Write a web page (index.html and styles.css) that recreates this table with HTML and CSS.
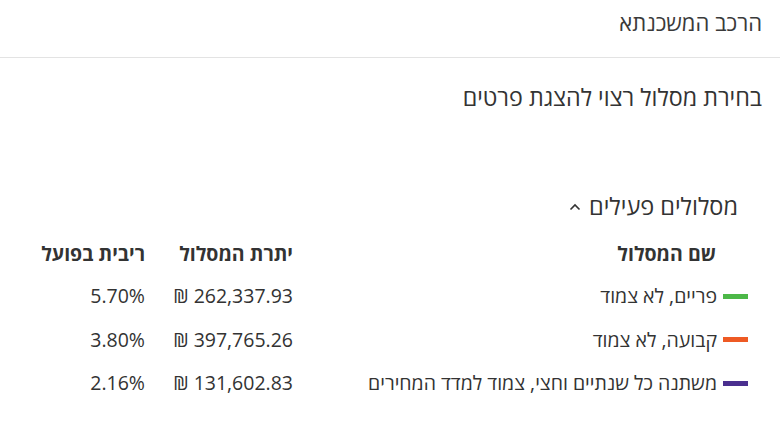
FILE: index.html
```html
<!DOCTYPE html>
<html lang="he" dir="rtl">
<head>
<meta charset="utf-8">
<link rel="stylesheet" href="styles.css">
</head>
<body>
<header class="top">
  <h1 class="title">הרכב המשכנתא</h1>
</header>
<main class="content">
  <p class="hint">בחירת מסלול רצוי להצגת פרטים</p>
  <section class="tracks">
    <h2 class="tracks-title">מסלולים פעילים
      <svg class="chev" width="12" height="8" viewBox="0 0 12 8"><path d="M1.5 6.5 L6 2 L10.5 6.5" fill="none" stroke="#333" stroke-width="1.6"/></svg>
    </h2>
    <div class="grid">
      <div class="th name-h">שם המסלול</div>
      <div class="th">יתרת המסלול</div>
      <div class="th">ריבית בפועל</div>

      <div class="td name"><span class="bar green"></span>פריים, לא צמוד</div>
      <div class="td"><span class="ltr">₪ 262,337.93</span></div>
      <div class="td"><span class="ltr">5.70%</span></div>

      <div class="td name"><span class="bar orange"></span>קבועה, לא צמוד</div>
      <div class="td"><span class="ltr">₪ 397,765.26</span></div>
      <div class="td"><span class="ltr">3.80%</span></div>

      <div class="td name"><span class="bar purple"></span>משתנה כל שנתיים וחצי, צמוד למדד המחירים</div>
      <div class="td"><span class="ltr">₪ 131,602.83</span></div>
      <div class="td"><span class="ltr">2.16%</span></div>
    </div>
  </section>
</main>
</body>
</html>
```
FILE: styles.css
```css
* { box-sizing: border-box; }
html, body { margin: 0; padding: 0; background: #fff; }
body {
  font-family: "Open Sans", "Noto Sans", sans-serif;
  color: #333;
  width: 780px;
}
.top {
  height: 58px;
  border-bottom: 1px solid #e3e3e3;
  padding: 8px 18px 0;
}
.title {
  margin: 0;
  font-size: 22px;
  font-weight: 400;
  color: #3a3a3a;
  line-height: 28px;
}
.content { padding: 0 18px 0 32px; }
.hint {
  margin: 24px 0 0;
  font-size: 23.3px;
  line-height: 30px;
  color: #333;
}
.tracks { margin-top: 79px; }
.tracks-title {
  margin: 0;
  padding-right: 24px;
  font-size: 23.5px;
  font-weight: 400;
  line-height: 30px;
  display: flex;
  align-items: center;
  gap: 8px;
}
.chev { margin-top: 2px; }
.grid {
  margin-top: 20px;
  display: grid;
  grid-template-columns: 455px 148px 1fr;
  grid-template-rows: 42px repeat(3, 43.5px);
  margin-right: 14px;
}
.th {
  font-size: 19.5px;
  font-weight: 700;
  line-height: 26px;
  color: #333;
}
.name-h { padding-right: 32px; }
.td {
  font-size: 19.5px;
  line-height: 26px;
  color: #333;
  display: flex;
  align-items: center;
  height: 26px;
}
.name { gap: 6px; }
.bar { width: 25px; height: 5px; flex: none; }
.green { background: #4cb848; }
.orange { background: #ee5a24; }
.purple { background: #4a2f8f; }
.ltr { direction: ltr; unicode-bidi: isolate; }
```
